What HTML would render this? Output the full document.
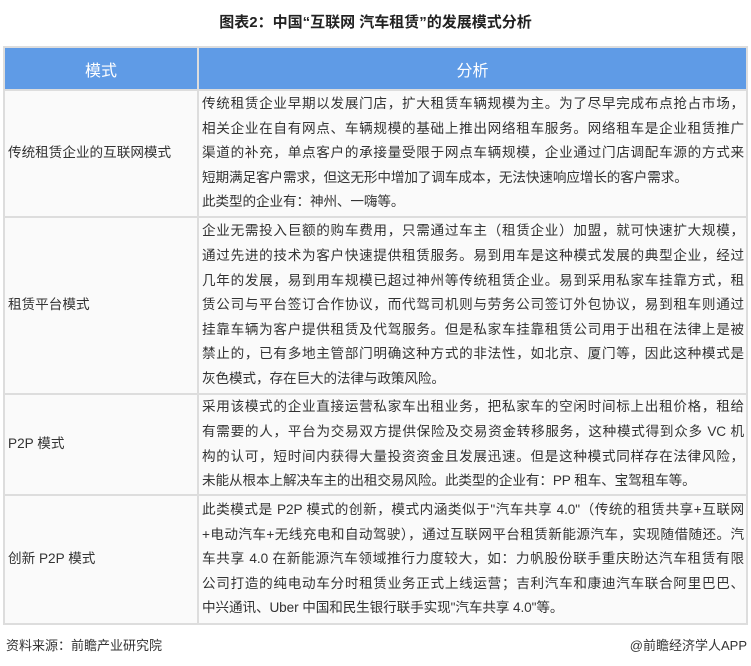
<!DOCTYPE html>
<html><head><meta charset="utf-8"><style>
*{margin:0;padding:0;box-sizing:border-box}
body{width:751px;height:666px;background:#fff;font-family:"Liberation Sans","Noto Sans CJK SC",sans-serif;color:#333;position:relative;overflow:hidden}
.title{position:absolute;top:11px;left:0;width:751px;text-align:center;font-size:15px;font-weight:bold;color:#222}
table{position:absolute;left:3px;top:46px;width:745px;border-collapse:collapse;table-layout:fixed}
td,th{border:2px solid #ddd;font-size:13.6px;vertical-align:middle}
th{background:#5f9be6;color:#fff;font-weight:normal;font-size:16px;height:43px}
td{background:#fafafa;line-height:24.6px}
td.l{padding-left:3px}
td.r{padding:0 2px 0 3px}
td.r span{display:block;text-align:justify;text-align-last:justify;white-space:nowrap;letter-spacing:-0.1px}
td.r span.e{text-align-last:left}
.foot{position:absolute;top:635px;font-size:13px;color:#333}
</style></head><body>
<div class="title">图表2：中国“互联网 汽车租赁”的发展模式分析</div>
<table>
<colgroup><col style="width:194px"><col></colgroup>
<tr><th>模式</th><th>分析</th></tr>
<tr style="height:127px"><td class="l">传统租赁企业的互联网模式</td><td class="r">
<span>传统租赁企业早期以发展门店，扩大租赁车辆规模为主。为了尽早完成布点抢占市场，</span>
<span>相关企业在自有网点、车辆规模的基础上推出网络租车服务。网络租车是企业租赁推广</span>
<span>渠道的补充，单点客户的承接量受限于网点车辆规模，企业通过门店调配车源的方式来</span>
<span class="e">短期满足客户需求，但这无形中增加了调车成本，无法快速响应增长的客户需求。</span>
<span class="e">此类型的企业有：神州、一嗨等。</span></td></tr>
<tr style="height:177px"><td class="l">租赁平台模式</td><td class="r">
<span>企业无需投入巨额的购车费用，只需通过车主（租赁企业）加盟，就可快速扩大规模，</span>
<span>通过先进的技术为客户快速提供租赁服务。易到用车是这种模式发展的典型企业，经过</span>
<span>几年的发展，易到用车规模已超过神州等传统租赁企业。易到采用私家车挂靠方式，租</span>
<span>赁公司与平台签订合作协议，而代驾司机则与劳务公司签订外包协议，易到租车则通过</span>
<span>挂靠车辆为客户提供租赁及代驾服务。但是私家车挂靠租赁公司用于出租在法律上是被</span>
<span>禁止的，已有多地主管部门明确这种方式的非法性，如北京、厦门等，因此这种模式是</span>
<span class="e">灰色模式，存在巨大的法律与政策风险。</span></td></tr>
<tr style="height:101px"><td class="l">P2P 模式</td><td class="r">
<span>采用该模式的企业直接运营私家车出租业务，把私家车的空闲时间标上出租价格，租给</span>
<span>有需要的人，平台为交易双方提供保险及交易资金转移服务，这种模式得到众多 VC 机</span>
<span>构的认可，短时间内获得大量投资资金且发展迅速。但是这种模式同样存在法律风险，</span>
<span class="e">未能从根本上解决车主的出租交易风险。此类型的企业有：PP 租车、宝驾租车等。</span></td></tr>
<tr style="height:129px"><td class="l">创新 P2P 模式</td><td class="r">
<span>此类模式是 P2P 模式的创新，模式内涵类似于"汽车共享 4.0"（传统的租赁共享+互联网</span>
<span>+电动汽车+无线充电和自动驾驶），通过互联网平台租赁新能源汽车，实现随借随还。汽</span>
<span>车共享 4.0 在新能源汽车领域推行力度较大，如：力帆股份联手重庆盼达汽车租赁有限</span>
<span>公司打造的纯电动车分时租赁业务正式上线运营；吉利汽车和康迪汽车联合阿里巴巴、</span>
<span class="e">中兴通讯、Uber 中国和民生银行联手实现"汽车共享 4.0"等。</span></td></tr>
</table>
<div class="foot" style="left:6px">资料来源：前瞻产业研究院</div>
<div class="foot" style="right:4px">@前瞻经济学人APP</div>
</body></html>
